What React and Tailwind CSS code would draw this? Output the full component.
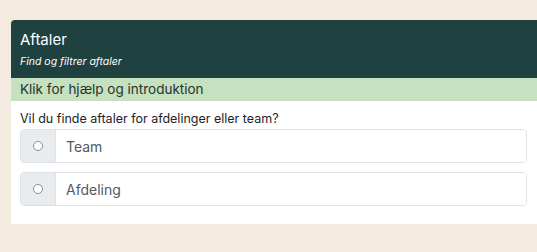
import React from 'react'

const Option = ({ label }) => {
  return (
    <label className="flex h-[34px] border border-[#dee2e6] rounded-[4px] overflow-hidden cursor-pointer">
      <div className="w-[35px] shrink-0 flex items-center justify-center bg-[#e9ecef] border-r border-[#dee2e6]">
        <span className="w-[10px] h-[10px] rounded-full border border-[#878c91] bg-white" />
      </div>
      <div className="flex-1 flex items-center pl-[10px] text-[14px] text-[#54595e] bg-white">
        {label}
      </div>
    </label>
  )
}

export default function App() {
  return (
    <div
      className="w-[537px] h-[252px] bg-[#f4ebe0] pt-[20px] pl-[11px] overflow-hidden"
      style={{ fontFamily: "Inter, 'Noto Sans', sans-serif" }}
    >
      <div className="w-[540px] bg-white rounded-tl-[4px] overflow-hidden">
        <div className="bg-[#1f4140] text-white px-[9px] pt-[10px] pb-[9px]">
          <div className="text-[15px] leading-[20px]">Aftaler</div>
          <div className="text-[10.5px] italic leading-[14px] mt-[5px]">Find og filtrer aftaler</div>
        </div>
        <div className="bg-[#c5e1bf] h-[23px] flex items-center px-[9px] text-[13.5px] text-[#26332d]">
          Klik for hjælp og introduktion
        </div>
        <div className="pl-[9px] pt-[9px] pb-[18px]">
          <div className="text-[12.5px] text-[#212529] leading-[18px] mb-[1px]">
            Vil du finde aftaler for afdelinger eller team?
          </div>
          <div className="w-[507px] flex flex-col gap-[9px]">
            <Option label="Team" />
            <Option label="Afdeling" />
          </div>
        </div>
      </div>
    </div>
  )
}
